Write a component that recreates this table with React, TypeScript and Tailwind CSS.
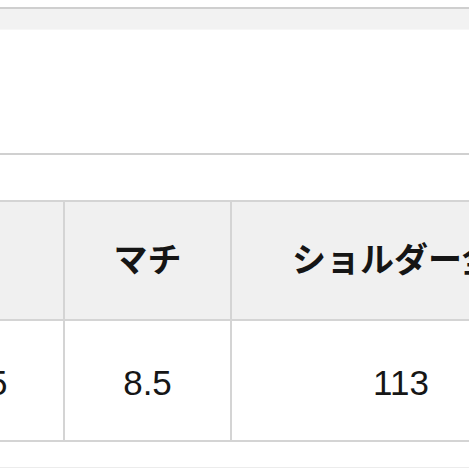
const font = { fontFamily: '"Liberation Sans", "Noto Sans CJK JP", sans-serif' }

const columns = [
  { head: '横', value: '25.5' },
  { head: 'マチ', value: '8.5' },
  { head: 'ショルダー全長', value: '113' },
]

export default function App() {
  return (
    <div className="w-[469px] h-[469px] overflow-hidden bg-white" style={font}>
      {/* tail of the previous block */}
      <div className="h-[7px]" />
      <div className="h-[2px] bg-[#cfcfcf]" />
      <div className="h-[21px] bg-[#f2f2f2] border-b border-[#f7f7f7]" />
      <div className="h-[123px]" />
      <div className="h-[2px] bg-[#d0d0d0]" />
      <div className="h-[45px]" />

      {/* size table, its first column runs off to the left */}
      <div className="ml-[-116px] w-[700px] border-t-2 border-[#d4d4d4]">
        <div className="grid grid-cols-[181px_167px_352px]">
          {columns.map((c, i) => (
            <div
              key={'h' + i}
              className={
                'h-[119px] flex items-center justify-center bg-[#f0f0f0] border-b-2 border-r-2 border-[#d4d4d4] text-[34px] font-bold text-[#151515] ' +
                (i === 2 ? 'pl-[8px]' : '')
              }
            >
              {c.head}
            </div>
          ))}
          {columns.map((c, i) => (
            <div
              key={'b' + i}
              className={
                'h-[121px] flex items-center justify-center pt-[6px] bg-white border-b-2 border-r-2 border-[#d4d4d4] text-[35px] text-[#161616] ' +
                (i === 2 ? 'pr-[12px]' : '')
              }
            >
              {c.value}
            </div>
          ))}
        </div>
      </div>

      <div className="h-[25px]" />
      <div className="h-px bg-[#ececec]" />
    </div>
  )
}
